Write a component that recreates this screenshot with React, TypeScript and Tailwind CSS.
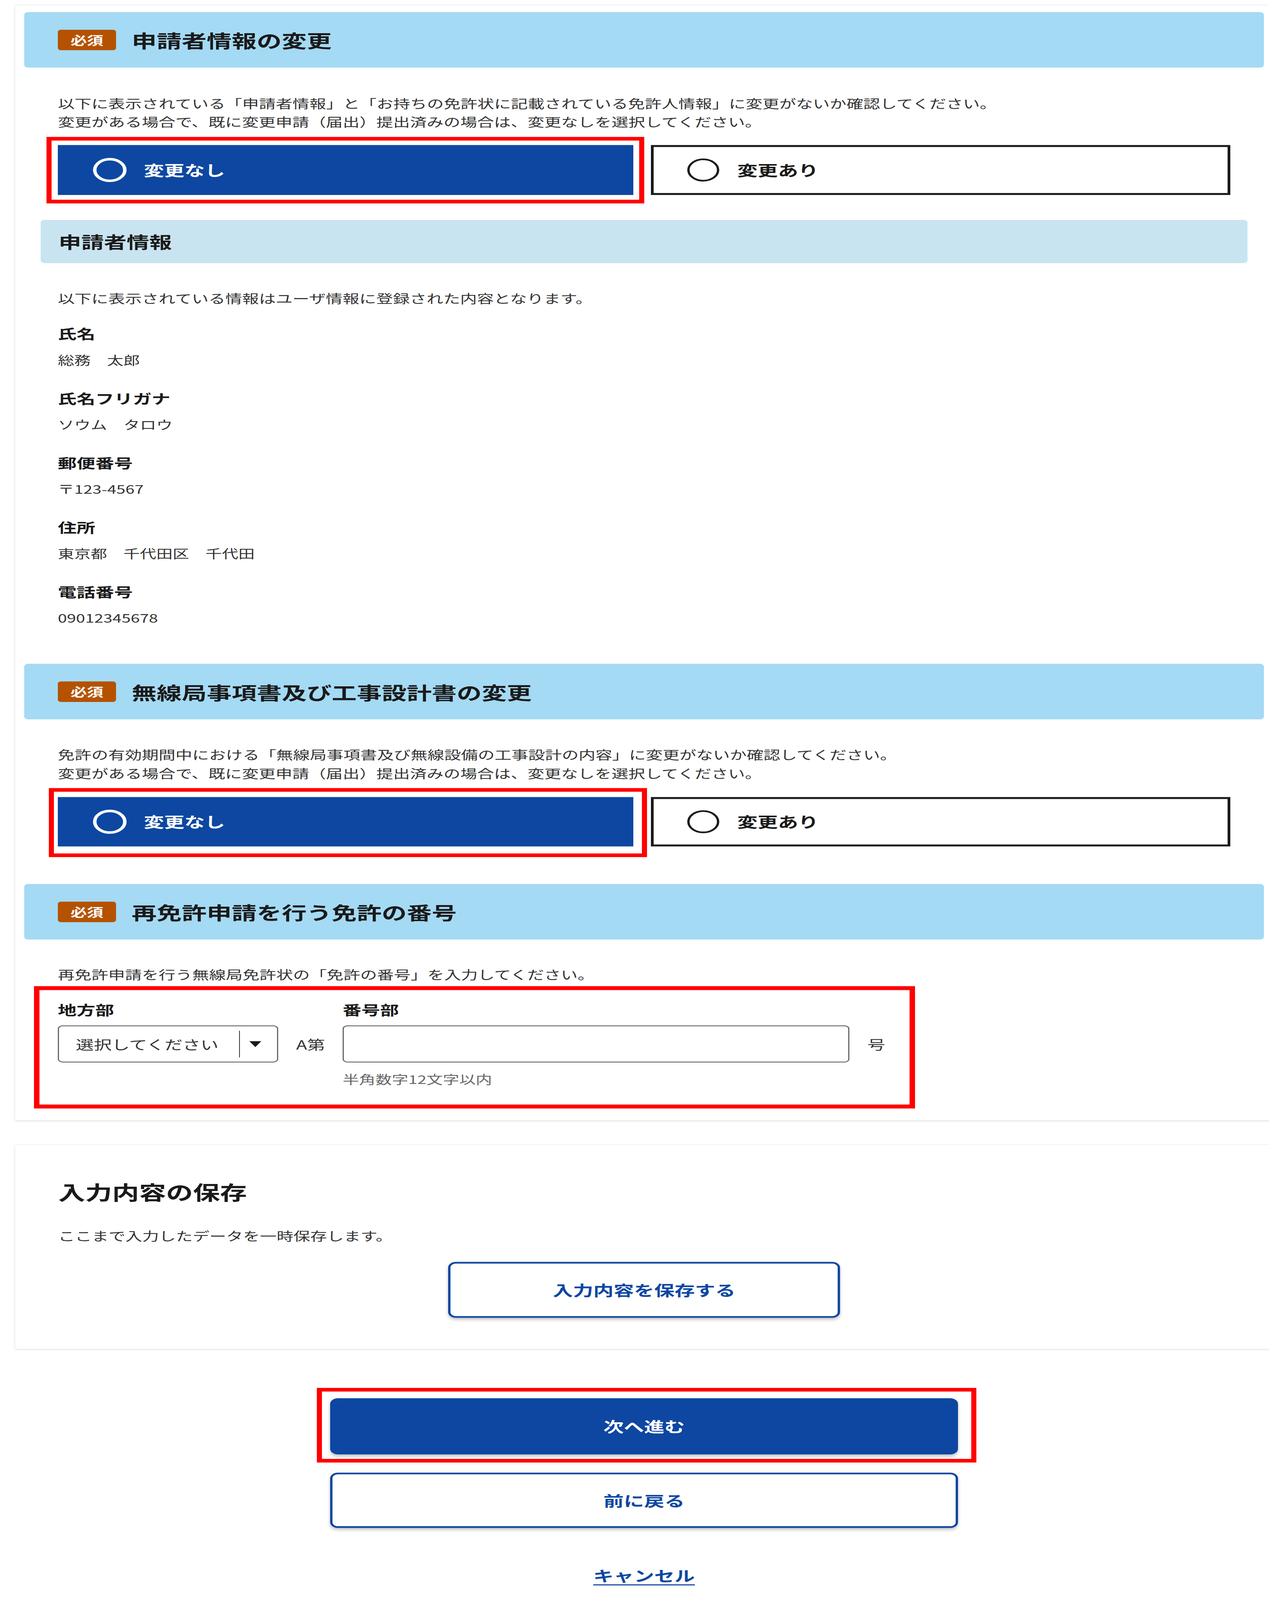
import React from "react";

const FONT = "font-['Noto_Sans_CJK_JP','Noto_Sans',sans-serif]";

function SectionHeader({ title }: { title: string }) {
  return (
    <div className="flex h-[198px] items-center gap-[40px] rounded-[10px] bg-[#a4daf4] pl-[86px]">
      <span className="flex h-[73px] w-[149px] items-center justify-center rounded-[8px] bg-[#b55200] text-[42px] font-bold leading-none text-white">
        必須
      </span>
      <span className="text-[64px] font-bold leading-none text-[#1a1a1a]">{title}</span>
    </div>
  );
}

function Radio({
  selected,
  label,
  red,
}: {
  selected: boolean;
  label: string;
  red?: React.ReactNode;
}) {
  if (selected) {
    return (
      <div className="relative flex flex-1 items-center bg-[#0d47a1] pl-[90px]">
        <span className="h-[86px] w-[86px] rounded-full border-[9px] border-white" />
        <span className="ml-[44px] text-[52px] font-bold leading-none text-white">{label}</span>
        {red}
      </div>
    );
  }
  return (
    <div className="flex flex-1 items-center border-[7px] border-[#1a1a1a] bg-white pl-[86px]">
      <span className="h-[82px] w-[82px] rounded-full border-[6px] border-[#1a1a1a]" />
      <span className="ml-[46px] text-[52px] font-bold leading-none text-[#1a1a1a]">{label}</span>
    </div>
  );
}

function InfoItem({ label, value, first }: { label: string; value: string; first?: boolean }) {
  return (
    <div className={first ? "mt-[60px]" : "mt-[70px]"}>
      <div className="text-[48px] font-bold leading-[66px] text-[#1a1a1a]">{label}</div>
      <div className="mt-[28px] text-[42px] leading-[66px] text-[#333]">{value}</div>
    </div>
  );
}

export default function App() {
  return (
    <div className="h-[4096px] w-[3248px] overflow-hidden bg-white">
      <div
        className={`${FONT} h-[5703px] w-[3248px] origin-top-left scale-y-[0.71822] overflow-hidden bg-white pt-[20px] text-[#333]`}
      >
        {/* Card 1 */}
        <div className="ml-[39px] w-[3219px] bg-white px-[23px] pb-[114px] pt-[23px] shadow-[0_1px_6px_rgba(0,0,0,0.18)]">
          <SectionHeader title="申請者情報の変更" />
          <div className="px-[86px]">
            <p className="mt-[92px] text-[43px] leading-[66px]">
              以下に表示されている「申請者情報」と「お持ちの免許状に記載されている免許人情報」に変更がないか確認してください。
              <br />
              変更がある場合で、既に変更申請（届出）提出済みの場合は、変更なしを選択してください。
            </p>
            <div className="mt-[52px] flex h-[178px] gap-[45px]">
              <Radio
                selected
                label="変更なし"
                red={
                  <span className="pointer-events-none absolute -bottom-[30px] -left-[29px] -right-[28px] -top-[29px] border-[13px] border-[#ff0000]" />
                }
              />
              <Radio selected={false} label="変更あり" />
            </div>
          </div>

          <div className="mx-[42px] mt-[89px] flex h-[154px] items-center rounded-[10px] bg-[#c8e4f1] pl-[46px] text-[58px] font-bold leading-none text-[#1a1a1a]">
            申請者情報
          </div>
          <div className="px-[86px]">
            <p className="mt-[91px] text-[43px] leading-[66px]">
              以下に表示されている情報はユーザ情報に登録された内容となります。
            </p>
            <InfoItem first label="氏名" value="総務　太郎" />
            <InfoItem label="氏名フリガナ" value="ソウム　タロウ" />
            <InfoItem label="郵便番号" value="〒123-4567" />
            <InfoItem label="住所" value="東京都　千代田区　千代田" />
            <InfoItem label="電話番号" value="09012345678" />
          </div>

          <div className="mt-[131px]">
            <SectionHeader title="無線局事項書及び工事設計書の変更" />
          </div>
          <div className="px-[86px]">
            <p className="mt-[91px] text-[43px] leading-[66px]">
              免許の有効期間中における「無線局事項書及び無線設備の工事設計の内容」に変更がないか確認してください。
              <br />
              変更がある場合で、既に変更申請（届出）提出済みの場合は、変更なしを選択してください。
            </p>
            <div className="mt-[54px] flex h-[176px] gap-[45px]">
              <Radio
                selected
                label="変更なし"
                red={
                  <span className="pointer-events-none absolute -bottom-[38px] -left-[23px] -right-[35px] -top-[32px] border-[13px] border-[#ff0000]" />
                }
              />
              <Radio selected={false} label="変更あり" />
            </div>
          </div>

          <div className="mt-[134px]">
            <SectionHeader title="再免許申請を行う免許の番号" />
          </div>
          <div className="px-[86px]">
            <p className="mt-[90px] text-[43px] leading-[66px]">
              再免許申請を行う無線局免許状の「免許の番号」を入力してください。
            </p>
            <div className="relative mt-[60px] flex items-start">
              <span className="pointer-events-none absolute left-[-61px] top-[-50px] h-[436px] w-[2255px] border-[14px] border-[#ff0000]" />
              <div className="w-[564px]">
                <div className="text-[48px] font-bold leading-[66px] text-[#1a1a1a]">地方部</div>
                <div className="mt-[24px] flex h-[132px] items-center rounded-[12px] border-[3px] border-[#666] bg-white pl-[43px]">
                  <span className="text-[46px] leading-none text-[#333]">選択してください</span>
                  <span className="ml-auto h-[95px] w-[2px] bg-[#333]" />
                  <svg className="ml-[24px] mr-[40px]" width="31" height="21" viewBox="0 0 31 21">
                    <polygon points="0,0 31,0 15.5,21" fill="#1a1a1a" />
                  </svg>
                </div>
              </div>
              <div className="mt-[90px] flex h-[132px] w-[165px] items-center pl-[46px] text-[46px] leading-none text-[#333]">
                A第
              </div>
              <div className="w-[1297px]">
                <div className="text-[48px] font-bold leading-[66px] text-[#1a1a1a]">番号部</div>
                <div className="mt-[24px] h-[132px] rounded-[12px] border-[3px] border-[#666] bg-white" />
                <div className="mt-[26px] text-[42px] leading-[66px] text-[#666]">半角数字12文字以内</div>
              </div>
              <div className="ml-[46px] mt-[90px] flex h-[132px] items-center text-[46px] leading-none text-[#333]">
                号
              </div>
            </div>
          </div>
        </div>

        {/* Card 2 */}
        <div className="ml-[39px] mt-[88px] w-[3219px] bg-white px-[110px] pb-[111px] pt-[116px] shadow-[0_1px_6px_rgba(0,0,0,0.18)]">
          <h2 className="text-[69px] font-bold leading-[100px] text-[#1a1a1a]">入力内容の保存</h2>
          <p className="mt-[73px] text-[43px] leading-[66px]">ここまで入力したデータを一時保存します。</p>
          <div className="mt-[62px] flex justify-center">
            <button className="flex h-[199px] w-[1003px] items-center justify-center rounded-[20px] border-[6px] border-[#0d47a1] bg-white text-[52px] font-bold text-[#0d47a1] shadow-[0_6px_10px_rgba(0,0,0,0.25)]">
              入力内容を保存する
            </button>
          </div>
        </div>

        {/* Bottom actions */}
        <div className="ml-[39px] flex w-[3219px] flex-col items-center pt-[176px]">
          <div className="relative">
            <button className="flex h-[200px] w-[1607px] items-center justify-center rounded-[20px] bg-[#0d47a1] text-[52px] font-bold text-white shadow-[0_6px_10px_rgba(0,0,0,0.25)]">
              次へ進む
            </button>
            <span className="pointer-events-none absolute -bottom-[29px] -left-[34px] -right-[47px] -top-[37px] border-[13px] border-[#ff0000]" />
          </div>
          <button className="mt-[65px] flex h-[197px] w-[1607px] items-center justify-center rounded-[20px] border-[6px] border-[#0d47a1] bg-white text-[52px] font-bold text-[#0d47a1] shadow-[0_6px_10px_rgba(0,0,0,0.25)]">
            前に戻る
          </button>
          <a className="mt-[134px] text-[52px] font-bold leading-[70px] text-[#0d47a1] underline decoration-[4px] underline-offset-[10px]">
            キャンセル
          </a>
        </div>
      </div>
    </div>
  );
}
